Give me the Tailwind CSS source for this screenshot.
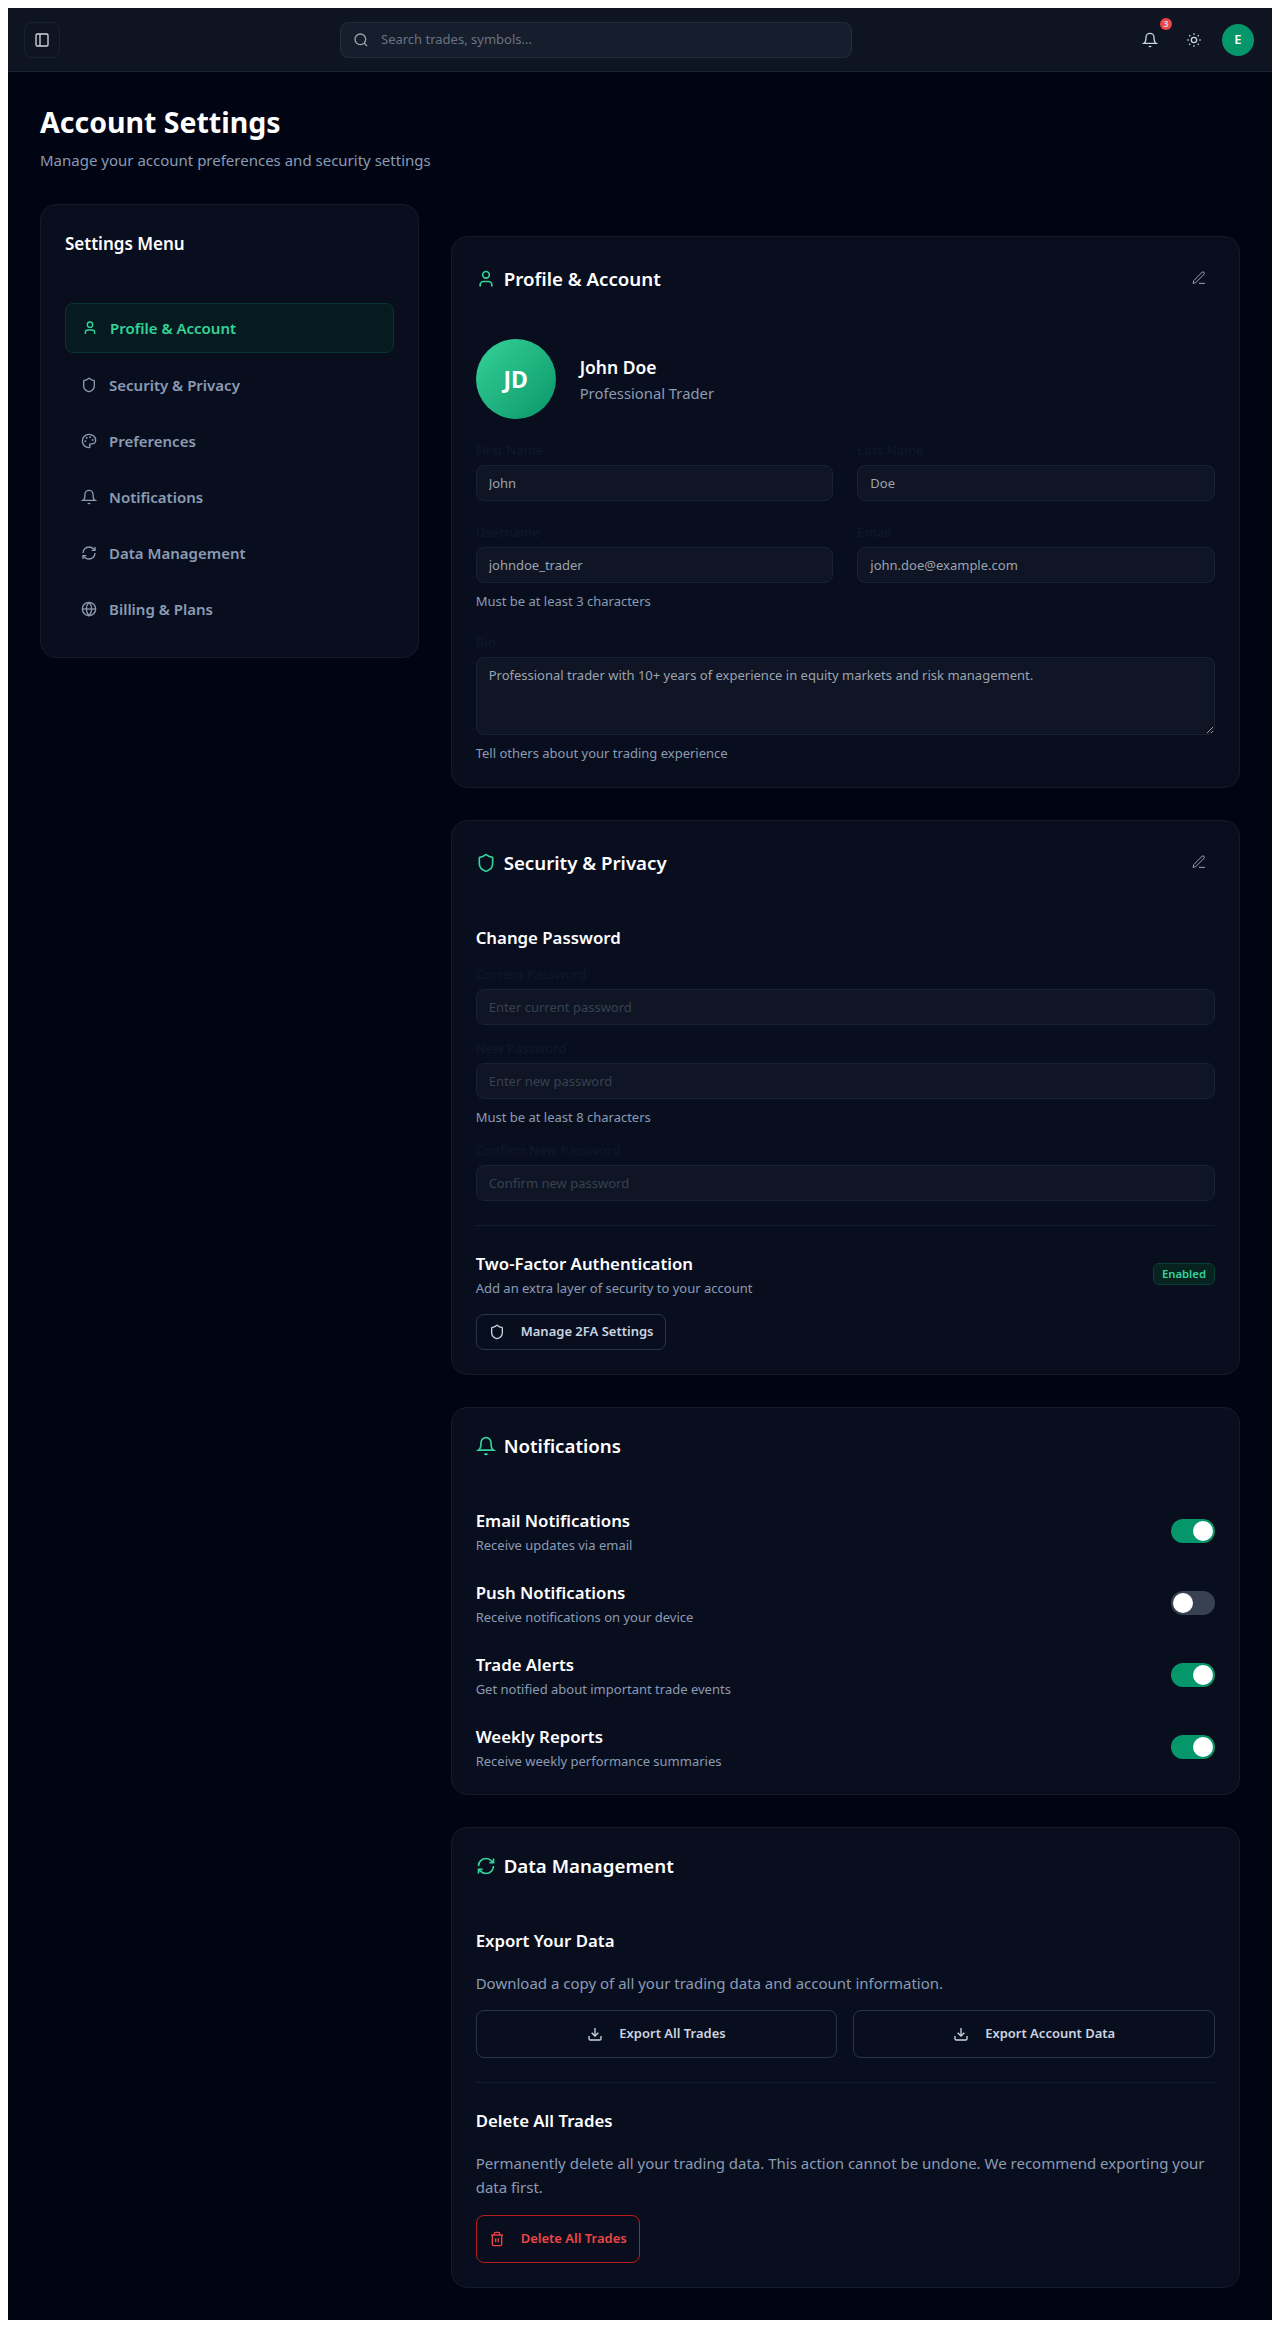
<!DOCTYPE html>
<html lang="en">
<head>
    <meta charset="UTF-8">
    <meta name="viewport" content="width=device-width, initial-scale=1.0">
    <title>Account Settings</title>
    <script src="https://cdn.jsdelivr.net/npm/@tailwindcss/browser@4"></script>
</head>
<body class="bg-white m-2 font-['Noto_Sans',sans-serif] text-white">
    <!-- icons -->
    <svg class="hidden">
        <symbol id="i-panel" viewBox="0 0 24 24"><rect x="3" y="3" width="18" height="18" rx="2"/><path d="M9 3v18"/></symbol>
        <symbol id="i-search" viewBox="0 0 24 24"><circle cx="11" cy="11" r="8"/><path d="m21 21-4.3-4.3"/></symbol>
        <symbol id="i-bell" viewBox="0 0 24 24"><path d="M6 8a6 6 0 0 1 12 0c0 7 3 9 3 9H3s3-2 3-9"/><path d="M10.3 21a1.94 1.94 0 0 0 3.4 0"/></symbol>
        <symbol id="i-sun" viewBox="0 0 24 24"><circle cx="12" cy="12" r="4"/><path d="M12 2v2M12 20v2M4.93 4.93l1.41 1.41M17.66 17.66l1.41 1.41M2 12h2M20 12h2M6.34 17.66l-1.41 1.41M19.07 4.93l-1.41 1.41"/></symbol>
        <symbol id="i-pen" viewBox="0 0 24 24"><path d="M12 20h9"/><path d="M16.5 3.5a2.12 2.12 0 0 1 3 3L7 19l-4 1 1-4Z"/></symbol>
        <symbol id="i-user" viewBox="0 0 24 24"><path d="M19 21v-2a4 4 0 0 0-4-4H9a4 4 0 0 0-4 4v2"/><circle cx="12" cy="7" r="4"/></symbol>
        <symbol id="i-shield" viewBox="0 0 24 24"><path d="M20 13c0 5-3.5 7.5-7.66 8.95a1 1 0 0 1-.67-.01C7.5 20.5 4 18 4 13V6a1 1 0 0 1 1-1c2 0 4.5-1.2 6.24-2.72a1.17 1.17 0 0 1 1.52 0C14.51 3.81 17 5 19 5a1 1 0 0 1 1 1z"/></symbol>
        <symbol id="i-palette" viewBox="0 0 24 24"><circle cx="13.5" cy="6.5" r=".5" fill="currentColor"/><circle cx="17.5" cy="10.5" r=".5" fill="currentColor"/><circle cx="8.5" cy="7.5" r=".5" fill="currentColor"/><circle cx="6.5" cy="12.5" r=".5" fill="currentColor"/><path d="M12 2C6.5 2 2 6.5 2 12s4.5 10 10 10c.926 0 1.648-.746 1.648-1.688 0-.437-.18-.835-.437-1.125-.29-.289-.438-.652-.438-1.125a1.64 1.64 0 0 1 1.668-1.668h1.996c3.051 0 5.555-2.503 5.555-5.554C21.965 6.012 17.461 2 12 2z"/></symbol>
        <symbol id="i-refresh" viewBox="0 0 24 24"><path d="M3 12a9 9 0 0 1 9-9 9.75 9.75 0 0 1 6.74 2.74L21 8"/><path d="M21 3v5h-5"/><path d="M21 12a9 9 0 0 1-9 9 9.75 9.75 0 0 1-6.74-2.74L3 16"/><path d="M8 16H3v5"/></symbol>
        <symbol id="i-globe" viewBox="0 0 24 24"><circle cx="12" cy="12" r="10"/><path d="M12 2a14.5 14.5 0 0 0 0 20 14.5 14.5 0 0 0 0-20"/><path d="M2 12h20"/></symbol>
        <symbol id="i-download" viewBox="0 0 24 24"><path d="M21 15v4a2 2 0 0 1-2 2H5a2 2 0 0 1-2-2v-4"/><path d="m7 10 5 5 5-5"/><path d="M12 15V3"/></symbol>
        <symbol id="i-trash" viewBox="0 0 24 24"><path d="M3 6h18"/><path d="M19 6v14c0 1-1 2-2 2H7c-1 0-2-1-2-2V6"/><path d="M8 6V4c0-1 1-2 2-2h4c1 0 2 1 2 2v2"/><path d="M10 11v6"/><path d="M14 11v6"/></symbol>
    </svg>

    <div class="min-h-[2312px] bg-[#010413]">
        <header class="h-16 flex items-center justify-between px-4 bg-[#0f1423] border-b border-[#1a2130]">
            <button class="w-9 h-9 flex items-center justify-center rounded-lg border border-[#1a2130] text-[#d1d5db]">
                <svg class="w-4 h-4 fill-none stroke-current stroke-2"><use href="#i-panel"/></svg>
            </button>
            <div class="w-[512px] h-9 flex items-center gap-3 px-3 rounded-lg bg-[#161e2e] border border-[#232c3c]">
                <svg class="w-4 h-4 fill-none stroke-[#9ca3af] stroke-2"><use href="#i-search"/></svg>
                <span class="text-[13px] text-[#6b7280]">Search trades, symbols...</span>
            </div>
            <div class="flex items-center gap-2">
                <button class="relative w-9 h-9 flex items-center justify-center text-[#cbd5e1]">
                    <svg class="w-4 h-4 fill-none stroke-current stroke-2"><use href="#i-bell"/></svg>
                    <span class="absolute -top-1 -right-1 w-3 h-3 rounded-full bg-[#ef4444] text-[9px] leading-3 font-bold text-center">3</span>
                </button>
                <button class="w-9 h-9 flex items-center justify-center text-[#cbd5e1]">
                    <svg class="w-4 h-4 fill-none stroke-current stroke-2"><use href="#i-sun"/></svg>
                </button>
                <div class="w-9 h-9 flex items-center justify-center">
                    <div class="w-8 h-8 rounded-full bg-[#059669] flex items-center justify-center text-[13px] font-semibold">E</div>
                </div>
            </div>
        </header>

        <main class="p-8">
            <h1 class="text-[28.5px] leading-9 font-bold mb-2">Account Settings</h1>
            <p class="text-[15px] leading-6 text-[#8a9bb3] mb-8">Manage your account preferences and security settings</p>

            <div class="grid grid-cols-3 gap-8 items-start">
                <aside class="bg-[#090e1f] border border-[#141b2a] rounded-2xl p-6">
                    <h2 class="text-[17px] leading-7 font-semibold mb-[46px] pt-px">Settings Menu</h2>
                    <nav class="-mt-px flex flex-col gap-2 text-[15px] leading-6 font-semibold text-[#8a9bb3]">
                        <a class="flex items-center gap-3 px-4 py-3 rounded-lg bg-[#061b20] border border-[#0a3330] text-[#34d399]">
                            <svg class="w-4 h-4 fill-none stroke-current stroke-2"><use href="#i-user"/></svg>Profile &amp; Account
                        </a>
                        <a class="flex items-center gap-3 px-4 py-3"><svg class="w-4 h-4 fill-none stroke-current stroke-2"><use href="#i-shield"/></svg>Security &amp; Privacy</a>
                        <a class="flex items-center gap-3 px-4 py-3"><svg class="w-4 h-4 fill-none stroke-current stroke-2"><use href="#i-palette"/></svg>Preferences</a>
                        <a class="flex items-center gap-3 px-4 py-3"><svg class="w-4 h-4 fill-none stroke-current stroke-2"><use href="#i-bell"/></svg>Notifications</a>
                        <a class="flex items-center gap-3 px-4 py-3"><svg class="w-4 h-4 fill-none stroke-current stroke-2"><use href="#i-refresh"/></svg>Data Management</a>
                        <a class="flex items-center gap-3 px-4 py-3"><svg class="w-4 h-4 fill-none stroke-current stroke-2"><use href="#i-globe"/></svg>Billing &amp; Plans</a>
                    </nav>
                </aside>

                <div class="col-span-2 mt-8 flex flex-col gap-8">
                    <!-- profile -->
                    <section class="bg-[#090e1f] border border-[#141b2a] rounded-2xl p-6">
                        <div class="h-9 flex items-center justify-between mb-[42px]">
                            <h2 class="flex items-center gap-2 text-[18.7px] leading-7 font-semibold"><svg class="w-5 h-5 fill-none stroke-[#34d399] stroke-2"><use href="#i-user"/></svg>Profile &amp; Account</h2>
                            <button class="w-9 h-9 flex items-center justify-center text-[#9ca3af]"><svg class="w-4 h-4 ml-1 mb-0.5 fill-none stroke-current stroke-[1.5]"><use href="#i-pen"/></svg></button>
                        </div>
                        <div class="flex items-center gap-6 mb-[21px]">
                            <div class="w-20 h-20 rounded-full bg-gradient-to-br from-[#34d399] to-[#059669] flex items-center justify-center text-[23px] font-bold">JD</div>
                            <div>
                                <p class="text-[17.5px] leading-7 font-semibold">John Doe</p>
                                <p class="text-[14.8px] leading-6 text-[#8a9bb3]">Professional Trader</p>
                            </div>
                        </div>
                        <div class="grid grid-cols-2 gap-x-6 gap-y-[21px]">
                            <div>
                                <label class="block text-[13px] leading-5 font-medium text-[#0f172a] mb-[5px]">First Name</label>
                                <input value="John" class="w-full h-9 px-3 rounded-lg bg-[#0f1524] border border-[#1a2130] text-[13px] text-[#9ca3af]">
                            </div>
                            <div>
                                <label class="block text-[13px] leading-5 font-medium text-[#0f172a] mb-[5px]">Last Name</label>
                                <input value="Doe" class="w-full h-9 px-3 rounded-lg bg-[#0f1524] border border-[#1a2130] text-[13px] text-[#9ca3af]">
                            </div>
                            <div>
                                <label class="block text-[13px] leading-5 font-medium text-[#0f172a] mb-[5px]">Username</label>
                                <input value="johndoe_trader" class="w-full h-9 px-3 rounded-lg bg-[#0f1524] border border-[#1a2130] text-[13px] text-[#9ca3af]">
                                <p class="mt-2 text-[13px] leading-5 text-[#8a9bb3]">Must be at least 3 characters</p>
                            </div>
                            <div>
                                <label class="block text-[13px] leading-5 font-medium text-[#0f172a] mb-[5px]">Email</label>
                                <input value="john.doe@example.com" class="w-full h-9 px-3 rounded-lg bg-[#0f1524] border border-[#1a2130] text-[13px] text-[#9ca3af]">
                            </div>
                        </div>
                        <div class="mt-[21px]">
                            <label class="block text-[13px] leading-5 font-medium text-[#0f172a] mb-[5px]">Bio</label>
                            <textarea class="block w-full h-[78px] px-3 py-2 rounded-lg bg-[#0f1524] border border-[#1a2130] text-[13px] text-[#9ca3af]">Professional trader with 10+ years of experience in equity markets and risk management.</textarea>
                            <p class="mt-2 text-[13px] leading-5 text-[#8a9bb3]">Tell others about your trading experience</p>
                        </div>
                    </section>

                    <!-- security -->
                    <section class="bg-[#090e1f] border border-[#141b2a] rounded-2xl p-6">
                        <div class="h-9 flex items-center justify-between mb-[43px]">
                            <h2 class="flex items-center gap-2 text-[18.7px] leading-7 font-semibold"><svg class="w-5 h-5 fill-none stroke-[#34d399] stroke-2"><use href="#i-shield"/></svg>Security &amp; Privacy</h2>
                            <button class="w-9 h-9 flex items-center justify-center text-[#9ca3af]"><svg class="w-4 h-4 ml-1 mb-0.5 fill-none stroke-current stroke-[1.5]"><use href="#i-pen"/></svg></button>
                        </div>
                        <h3 class="text-[16.8px] leading-7 font-semibold mb-3">Change Password</h3>
                        <div class="flex flex-col gap-[13px]">
                            <div>
                                <label class="block text-[13px] leading-5 font-medium text-[#0f172a] mb-[5px]">Current Password</label>
                                <input placeholder="Enter current password" class="w-full h-9 px-3 rounded-lg bg-[#0f1524] border border-[#1a2130] text-[13px] placeholder:text-[#374151]">
                            </div>
                            <div>
                                <label class="block text-[13px] leading-5 font-medium text-[#0f172a] mb-[5px]">New Password</label>
                                <input placeholder="Enter new password" class="w-full h-9 px-3 rounded-lg bg-[#0f1524] border border-[#1a2130] text-[13px] placeholder:text-[#374151]">
                                <p class="mt-2 text-[13px] leading-5 text-[#8a9bb3]">Must be at least 8 characters</p>
                            </div>
                            <div>
                                <label class="block text-[13px] leading-5 font-medium text-[#0f172a] mb-[5px]">Confirm New Password</label>
                                <input placeholder="Confirm new password" class="w-full h-9 px-3 rounded-lg bg-[#0f1524] border border-[#1a2130] text-[13px] placeholder:text-[#374151]">
                            </div>
                        </div>
                        <div class="border-t border-[#141b2a] mt-6 pt-6">
                            <div class="flex items-center justify-between mb-4">
                                <div>
                                    <h3 class="text-[16.8px] leading-7 font-semibold">Two-Factor Authentication</h3>
                                    <p class="text-[13px] leading-5 text-[#8a9bb3]">Add an extra layer of security to your account</p>
                                </div>
                                <span class="px-2 py-[1px] rounded-md bg-[#06231f] border border-[#0a3d33] text-[11.3px] leading-[18px] font-semibold text-[#34d399]">Enabled</span>
                            </div>
                            <button class="h-9 flex items-center gap-4 px-3 rounded-lg border border-[#2b3444] text-[13px] font-semibold text-[#cbd5e1]">
                                <svg class="w-4 h-4 fill-none stroke-current stroke-2"><use href="#i-shield"/></svg>Manage 2FA Settings
                            </button>
                        </div>
                    </section>

                    <!-- notifications -->
                    <section class="bg-[#090e1f] border border-[#141b2a] rounded-2xl px-6 pt-6 pb-[23px]">
                        <h2 class="flex items-center gap-2 text-[18.7px] leading-7 font-semibold mb-[47px]"><svg class="w-5 h-5 fill-none stroke-[#34d399] stroke-2"><use href="#i-bell"/></svg>Notifications</h2>
                        <div class="flex flex-col gap-6">
                            <div class="flex items-center justify-between">
                                <div><p class="text-[16.8px] leading-7 font-semibold">Email Notifications</p><p class="text-[13px] leading-5 text-[#8a9bb3]">Receive updates via email</p></div>
                                <div class="w-11 h-6 p-0.5 rounded-full bg-[#059669] flex justify-end"><span class="w-5 h-5 rounded-full bg-white"></span></div>
                            </div>
                            <div class="flex items-center justify-between">
                                <div><p class="text-[16.8px] leading-7 font-semibold">Push Notifications</p><p class="text-[13px] leading-5 text-[#8a9bb3]">Receive notifications on your device</p></div>
                                <div class="w-11 h-6 p-0.5 rounded-full bg-[#374151] flex justify-start"><span class="w-5 h-5 rounded-full bg-white"></span></div>
                            </div>
                            <div class="flex items-center justify-between">
                                <div><p class="text-[16.8px] leading-7 font-semibold">Trade Alerts</p><p class="text-[13px] leading-5 text-[#8a9bb3]">Get notified about important trade events</p></div>
                                <div class="w-11 h-6 p-0.5 rounded-full bg-[#059669] flex justify-end"><span class="w-5 h-5 rounded-full bg-white"></span></div>
                            </div>
                            <div class="flex items-center justify-between">
                                <div><p class="text-[16.8px] leading-7 font-semibold">Weekly Reports</p><p class="text-[13px] leading-5 text-[#8a9bb3]">Receive weekly performance summaries</p></div>
                                <div class="w-11 h-6 p-0.5 rounded-full bg-[#059669] flex justify-end"><span class="w-5 h-5 rounded-full bg-white"></span></div>
                            </div>
                        </div>
                    </section>

                    <!-- data -->
                    <section class="bg-[#090e1f] border border-[#141b2a] rounded-2xl p-6">
                        <h2 class="flex items-center gap-2 text-[18.7px] leading-7 font-semibold mb-[47px]"><svg class="w-5 h-5 fill-none stroke-[#34d399] stroke-2"><use href="#i-refresh"/></svg>Data Management</h2>
                        <h3 class="text-[16.8px] leading-7 font-semibold mb-4">Export Your Data</h3>
                        <p class="text-[15px] leading-6 text-[#8a9bb3] mb-[15px]">Download a copy of all your trading data and account information.</p>
                        <div class="grid grid-cols-2 gap-4">
                            <button class="h-12 flex items-center justify-center gap-4 rounded-lg border border-[#2b3444] text-[13px] font-semibold text-[#cbd5e1]"><svg class="w-4 h-4 fill-none stroke-current stroke-2"><use href="#i-download"/></svg>Export All Trades</button>
                            <button class="h-12 flex items-center justify-center gap-4 rounded-lg border border-[#2b3444] text-[13px] font-semibold text-[#cbd5e1]"><svg class="w-4 h-4 fill-none stroke-current stroke-2"><use href="#i-download"/></svg>Export Account Data</button>
                        </div>
                        <div class="border-t border-[#141b2a] mt-6 pt-6">
                            <h3 class="text-[16.8px] leading-7 font-semibold mb-4">Delete All Trades</h3>
                            <p class="text-[15px] leading-6 text-[#8a9bb3] mb-4">Permanently delete all your trading data. This action cannot be undone. We recommend exporting your data first.</p>
                            <button class="h-12 flex items-center gap-4 px-3 rounded-lg border border-[#b91c1c] text-[13px] font-semibold text-[#ef4444]"><svg class="w-4 h-4 fill-none stroke-current stroke-2"><use href="#i-trash"/></svg>Delete All Trades</button>
                        </div>
                    </section>
                </div>
            </div>
        </main>
    </div>
</body>
</html>
